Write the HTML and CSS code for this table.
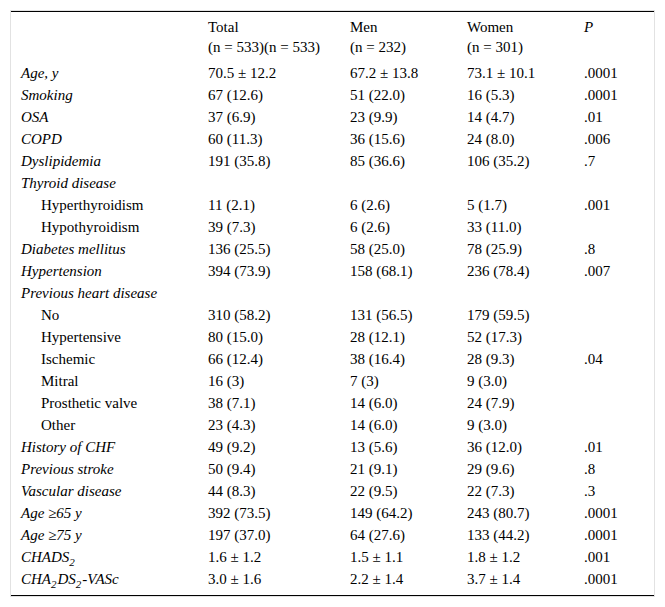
FILE: index.html
```html
<!DOCTYPE html>
<html>
<head>
<meta charset="utf-8">
<link rel="stylesheet" href="styles.css">
</head>
<body>
<div class="frame">
<table class="data">
<colgroup>
<col class="c-label"><col class="c-total"><col class="c-men"><col class="c-women"><col class="c-p">
</colgroup>
<thead>
<tr><th></th><th>Total<br>(n = 533)(n = 533)</th><th>Men<br>(n = 232)</th><th>Women<br>(n = 301)</th><th><i>P</i></th></tr>
</thead>
<tbody>
<tr><td class="lab">Age, y</td><td>70.5 ± 12.2</td><td>67.2 ± 13.8</td><td>73.1 ± 10.1</td><td>.0001</td></tr>
<tr><td class="lab">Smoking</td><td>67 (12.6)</td><td>51 (22.0)</td><td>16 (5.3)</td><td>.0001</td></tr>
<tr><td class="lab">OSA</td><td>37 (6.9)</td><td>23 (9.9)</td><td>14 (4.7)</td><td>.01</td></tr>
<tr><td class="lab">COPD</td><td>60 (11.3)</td><td>36 (15.6)</td><td>24 (8.0)</td><td>.006</td></tr>
<tr><td class="lab">Dyslipidemia</td><td>191 (35.8)</td><td>85 (36.6)</td><td>106 (35.2)</td><td>.7</td></tr>
<tr><td class="lab">Thyroid disease</td><td></td><td></td><td></td><td></td></tr>
<tr><td class="sub">Hyperthyroidism</td><td>11 (2.1)</td><td>6 (2.6)</td><td>5 (1.7)</td><td>.001</td></tr>
<tr><td class="sub">Hypothyroidism</td><td>39 (7.3)</td><td>6 (2.6)</td><td>33 (11.0)</td><td></td></tr>
<tr><td class="lab">Diabetes mellitus</td><td>136 (25.5)</td><td>58 (25.0)</td><td>78 (25.9)</td><td>.8</td></tr>
<tr><td class="lab">Hypertension</td><td>394 (73.9)</td><td>158 (68.1)</td><td>236 (78.4)</td><td>.007</td></tr>
<tr><td class="lab">Previous heart disease</td><td></td><td></td><td></td><td></td></tr>
<tr><td class="sub">No</td><td>310 (58.2)</td><td>131 (56.5)</td><td>179 (59.5)</td><td></td></tr>
<tr><td class="sub">Hypertensive</td><td>80 (15.0)</td><td>28 (12.1)</td><td>52 (17.3)</td><td></td></tr>
<tr><td class="sub">Ischemic</td><td>66 (12.4)</td><td>38 (16.4)</td><td>28 (9.3)</td><td>.04</td></tr>
<tr><td class="sub">Mitral</td><td>16 (3)</td><td>7 (3)</td><td>9 (3.0)</td><td></td></tr>
<tr><td class="sub">Prosthetic valve</td><td>38 (7.1)</td><td>14 (6.0)</td><td>24 (7.9)</td><td></td></tr>
<tr><td class="sub">Other</td><td>23 (4.3)</td><td>14 (6.0)</td><td>9 (3.0)</td><td></td></tr>
<tr><td class="lab">History of CHF</td><td>49 (9.2)</td><td>13 (5.6)</td><td>36 (12.0)</td><td>.01</td></tr>
<tr><td class="lab">Previous stroke</td><td>50 (9.4)</td><td>21 (9.1)</td><td>29 (9.6)</td><td>.8</td></tr>
<tr><td class="lab">Vascular disease</td><td>44 (8.3)</td><td>22 (9.5)</td><td>22 (7.3)</td><td>.3</td></tr>
<tr><td class="lab">Age ≥65 y</td><td>392 (73.5)</td><td>149 (64.2)</td><td>243 (80.7)</td><td>.0001</td></tr>
<tr><td class="lab">Age ≥75 y</td><td>197 (37.0)</td><td>64 (27.6)</td><td>133 (44.2)</td><td>.0001</td></tr>
<tr><td class="lab">CHADS<sub>2</sub></td><td>1.6 ± 1.2</td><td>1.5 ± 1.1</td><td>1.8 ± 1.2</td><td>.001</td></tr>
<tr><td class="lab">CHA<sub>2</sub>DS<sub>2</sub>-VASc</td><td>3.0 ± 1.6</td><td>2.2 ± 1.4</td><td>3.7 ± 1.4</td><td>.0001</td></tr>
</tbody>
</table>
</div>
</body>
</html>
```
FILE: styles.css
```css
html, body {
  margin: 0;
  padding: 0;
  background: #ffffff;
}
body {
  padding: 10px 0 0 10px;
  font-family: "Liberation Serif", "Times New Roman", serif;
  font-size: 15px;
  color: #000000;
}
.frame {
  width: 645px;
  box-sizing: border-box;
  border: 1px solid #e2e2e2;
}
.data {
  width: 100%;
  table-layout: fixed;
  border-collapse: collapse;
  border-top: 1px solid #000;
  border-bottom: 1px solid #000;
}
.c-label { width: 187px; }
.c-total { width: 142px; }
.c-men { width: 117px; }
.c-women { width: 117px; }
.c-p { width: 80px; }
th {
  font-weight: normal;
  text-align: left;
  vertical-align: top;
  padding: 5px 0 5px 10px;
  line-height: 20px;
  white-space: nowrap;
}
td {
  padding: 0 0 0 10px;
  height: 22px;
  line-height: 22px;
  white-space: nowrap;
  vertical-align: middle;
}
tbody tr:last-child td {
  padding-bottom: 5px;
}
.lab {
  font-style: italic;
}
.sub {
  padding-left: 30px;
}
sub {
  font-size: 11px;
  line-height: 0;
  vertical-align: -4px;
  padding: 0 1px 0 0;
}
```
